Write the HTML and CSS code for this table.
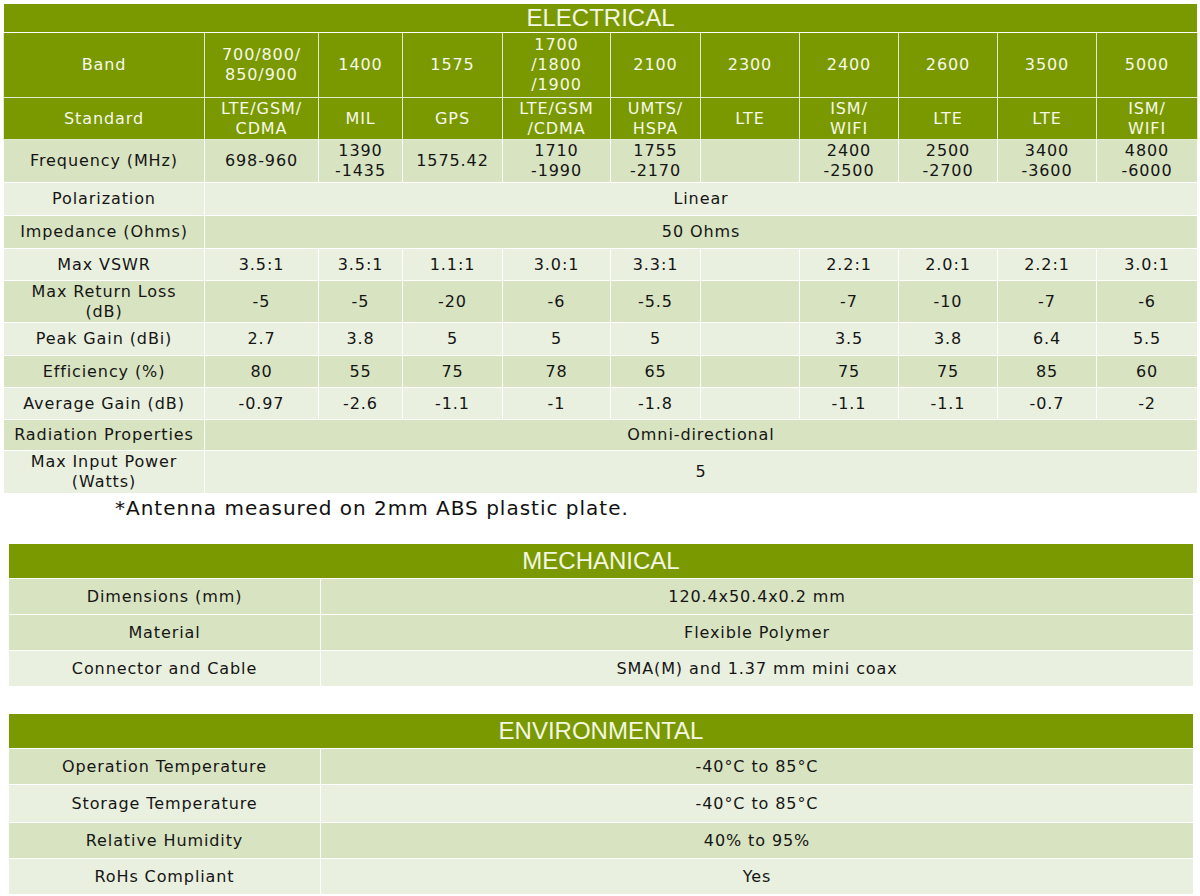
FILE: index.html
```html
<!DOCTYPE html>
<html>
<head>
<meta charset="utf-8">
<title>Antenna Specifications</title>
<link rel="stylesheet" href="styles.css">
</head>
<body>
<table class="spec spec-elec">
  <colgroup>
    <col class="c-label"><col class="c1"><col class="c2"><col class="c3"><col class="c4"><col class="c5"><col class="c6"><col class="c7"><col class="c8"><col class="c9"><col class="c10">
  </colgroup>
  <tr class="r-title"><th colspan="11" class="title">ELECTRICAL</th></tr>
  <tr class="r-head r-band">
    <th>Band</th><th>700/800/<br>850/900</th><th>1400</th><th>1575</th><th>1700<br>/1800<br>/1900</th><th>2100</th><th>2300</th><th>2400</th><th>2600</th><th>3500</th><th>5000</th>
  </tr>
  <tr class="r-head r-std">
    <th>Standard</th><th>LTE/GSM/<br>CDMA</th><th>MIL</th><th>GPS</th><th>LTE/GSM<br>/CDMA</th><th>UMTS/<br>HSPA</th><th>LTE</th><th>ISM/<br>WIFI</th><th>LTE</th><th>LTE</th><th>ISM/<br>WIFI</th>
  </tr>
  <tr class="dark r-freq">
    <td>Frequency (MHz)</td><td>698-960</td><td>1390<br>-1435</td><td>1575.42</td><td>1710<br>-1990</td><td>1755<br>-2170</td><td></td><td>2400<br>-2500</td><td>2500<br>-2700</td><td>3400<br>-3600</td><td>4800<br>-6000</td>
  </tr>
  <tr class="light r-pol">
    <td>Polarization</td><td colspan="10">Linear</td>
  </tr>
  <tr class="dark r-imp">
    <td>Impedance (Ohms)</td><td colspan="10">50 Ohms</td>
  </tr>
  <tr class="light r-vswr">
    <td>Max VSWR</td><td>3.5:1</td><td>3.5:1</td><td>1.1:1</td><td>3.0:1</td><td>3.3:1</td><td></td><td>2.2:1</td><td>2.0:1</td><td>2.2:1</td><td>3.0:1</td>
  </tr>
  <tr class="dark r-rl">
    <td>Max Return Loss<br>(dB)</td><td>-5</td><td>-5</td><td>-20</td><td>-6</td><td>-5.5</td><td></td><td>-7</td><td>-10</td><td>-7</td><td>-6</td>
  </tr>
  <tr class="light r-peak">
    <td>Peak Gain (dBi)</td><td>2.7</td><td>3.8</td><td>5</td><td>5</td><td>5</td><td></td><td>3.5</td><td>3.8</td><td>6.4</td><td>5.5</td>
  </tr>
  <tr class="dark r-eff">
    <td>Efficiency (%)</td><td>80</td><td>55</td><td>75</td><td>78</td><td>65</td><td></td><td>75</td><td>75</td><td>85</td><td>60</td>
  </tr>
  <tr class="light r-avg">
    <td>Average Gain (dB)</td><td>-0.97</td><td>-2.6</td><td>-1.1</td><td>-1</td><td>-1.8</td><td></td><td>-1.1</td><td>-1.1</td><td>-0.7</td><td>-2</td>
  </tr>
  <tr class="dark r-rad">
    <td>Radiation Properties</td><td colspan="10">Omni-directional</td>
  </tr>
  <tr class="light r-pow">
    <td>Max Input Power<br>(Watts)</td><td colspan="10">5</td>
  </tr>
</table>
<p class="note">*Antenna measured on 2mm ABS plastic plate.</p>

<table class="spec spec-two spec-mech">
  <colgroup><col class="c-key"><col class="c-val"></colgroup>
  <tr class="r-title"><th colspan="2" class="title">MECHANICAL</th></tr>
  <tr class="dark"><td>Dimensions (mm)</td><td>120.4x50.4x0.2 mm</td></tr>
  <tr class="dark"><td>Material</td><td>Flexible Polymer</td></tr>
  <tr class="light"><td>Connector and Cable</td><td>SMA(M) and 1.37 mm mini coax</td></tr>
</table>

<table class="spec spec-two spec-env">
  <colgroup><col class="c-key"><col class="c-val"></colgroup>
  <tr class="r-title"><th colspan="2" class="title">ENVIRONMENTAL</th></tr>
  <tr class="dark"><td>Operation Temperature</td><td>-40°C to 85°C</td></tr>
  <tr class="light r-tall"><td>Storage Temperature</td><td>-40°C to 85°C</td></tr>
  <tr class="dark"><td>Relative Humidity</td><td>40% to 95%</td></tr>
  <tr class="light"><td>RoHs Compliant</td><td>Yes</td></tr>
</table>
</body>
</html>
```

FILE: styles.css
```css
html, body {
  margin: 0;
  padding: 0;
  background: #ffffff;
}

body {
  font-family: "DejaVu Sans", Verdana, sans-serif;
  color: #151515;
}

.spec {
  border-collapse: collapse;
  table-layout: fixed;
  font-size: 16px;
  line-height: 20px;
  letter-spacing: 0.9px;
}

.spec td, .spec th {
  padding: 0;
  text-align: center;
  vertical-align: middle;
  border: 1px solid #ffffff;
  font-weight: normal;
}

.spec-elec {
  margin: 3px 0 0 3px;
  width: 1194px;
}

.c-label { width: 201px; }
.c1 { width: 114px; }
.c2 { width: 84px; }
.c3 { width: 100px; }
.c4 { width: 108px; }
.c5 { width: 90px; }
.c6 { width: 99px; }
.c7 { width: 99px; }
.c8 { width: 99px; }
.c9 { width: 99px; }
.c10 { width: 101px; }

.spec .title {
  background: #7a9900;
  color: #f4f7e4;
  font-family: "Liberation Sans", Arial, sans-serif;
  font-size: 24px;
  line-height: 28px;
  letter-spacing: 0;
  font-weight: normal;
}

.spec-elec .r-title { height: 29px; }

.r-head th {
  background: #7a9900;
  color: #f6f8ea;
  border-color: #e2ead0;
}

.r-band { height: 65px; }
.r-std { height: 42px; }
.r-freq { height: 43px; }
.r-pol { height: 33px; }
.r-imp { height: 33px; }
.r-vswr { height: 32px; }
.r-rl { height: 42px; }
.r-peak { height: 33px; }
.r-eff { height: 32px; }
.r-avg { height: 32px; }
.r-rad { height: 31px; }
.r-pow { height: 43px; }

.dark td { background: #d8e3c1; }
.light td { background: #eaf0df; }

.note {
  margin: 0;
  padding: 2px 0 0 115px;
  height: 47px;
  font-size: 20px;
  line-height: 24px;
  letter-spacing: 1px;
  color: #111111;
}

.spec-two {
  margin-left: 8px;
  width: 1185px;
}

.c-key { width: 312px; }
.c-val { width: 873px; }

.spec-two .r-title { height: 35px; }
.spec-two tr { height: 36px; }
.spec-two .r-tall { height: 38px; }

.spec-env {
  margin-top: 26px;
}
```
